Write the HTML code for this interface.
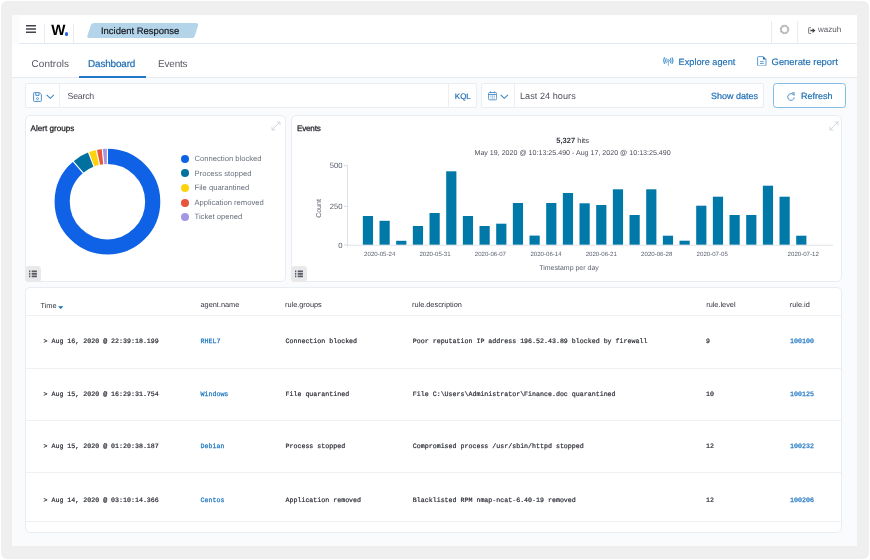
<!DOCTYPE html>
<html lang="en">
<head>
<meta charset="utf-8">
<title>Incident Response</title>
<style>
*{box-sizing:border-box;margin:0;padding:0}
html,body{width:870px;height:560px;overflow:hidden;background:#fff}
body{font-family:"Liberation Sans",sans-serif;color:#343741;position:relative}
#root{position:absolute;left:0;top:0;width:870px;height:560px;will-change:transform;text-rendering:geometricPrecision}
.abs{position:absolute}
#frame{left:.7px;top:.8px;width:868.2px;height:558.3px;background:#efefef;border-radius:6px}
#inner{left:12.4px;top:15px;width:845.1px;height:530.6px;background:#fafbfd}
#hdr{left:19px;top:15px;width:838.4px;height:29px;background:#fff;border-bottom:1px solid #e3e9f1}
#tabs{left:12.4px;top:44px;width:845px;height:33.8px;background:#fff;border-bottom:1px solid #e6e9ee}
.vline{width:1px;background:#e3e8f0}
.t{position:absolute;white-space:nowrap;line-height:1}
.tab{font-size:9.9px;color:#53575f;top:60.1px}
.blue{color:#1c6db3}
.box{position:absolute;background:#fff;border:1px solid #eaedf2;border-radius:2px}
.panel{position:absolute;background:#fff;border:1px solid #e9ecf3;border-radius:5px}
.ptitle{font-size:8.15px;color:#1a1c21;-webkit-text-stroke:0.25px #1a1c21}
.leg{font-size:7.65px;color:#69707d}
.dot{position:absolute;width:8.2px;height:8.2px;border-radius:50%}
.lbtn{position:absolute;width:16.1px;height:15.9px;background:#e9e9ea;border-radius:3.5px}
.th{font-size:7.35px;color:#2f333c;top:301.0px}
.mono{font-family:"Liberation Mono",monospace;font-size:6.63px;color:#2b2e36;-webkit-text-stroke:0.2px #2b2e36}
.mono.link{color:#2179c2;-webkit-text-stroke:0.25px #2179c2}
.rline{position:absolute;left:26px;width:815px;height:1px;background:#eef0f4}
</style>
</head>
<body>
<div id="root">
<div id="frame" class="abs"></div>
<div id="inner" class="abs"></div>

<!-- header -->
<div id="hdr" class="abs"></div>
<svg class="abs" style="left:26px;top:25px" width="10" height="8" viewBox="0 0 10 8"><path d="M0 .75h10M0 4h10M0 7.25h10" stroke="#40434b" stroke-width="1.4"/></svg>
<div class="abs vline" style="left:44.4px;top:24px;height:19px;background:#e9edf3"></div>
<div class="abs vline" style="left:73.1px;top:24px;height:19px;background:#e9edf3"></div><div class="abs" style="left:64.5px;top:32.1px;width:3.5px;height:3.5px;border-radius:50%;background:#2563eb"></div>
<div class="t" style="left:51.3px;top:22.6px;font-size:15px;font-weight:bold;color:#000;letter-spacing:-0.3px">W<span style="color:#2563eb;font-size:11px;margin-left:.1px">.</span></div>
<svg class="abs" style="left:86px;top:22.7px" width="113" height="15.4" viewBox="0 0 113 15.4"><path d="M4.54 2.87Q5.4 0 8.4 0H109.9Q112.9 0 112.04 2.87L108.96 12.53Q108.1 15.4 105.1 15.4H3.6Q.6 15.4 1.46 12.53Z" fill="#b4d5e9"/></svg>
<div class="t" style="left:101px;top:27px;font-size:9.45px;color:#15191f;-webkit-text-stroke:0.2px #15191f">Incident Response</div>
<div class="abs vline" style="left:771px;top:21px;height:22px;background:#ebebeb"></div>
<div class="abs vline" style="left:797px;top:21px;height:22px;background:#ebebeb"></div>
<svg class="abs" style="left:778.9px;top:24px" width="11" height="11" viewBox="0 0 11 11"><circle cx="5.5" cy="5.5" r="3.7" fill="none" stroke="#c9c9c9" stroke-width="2.1"/><circle cx="5.5" cy="5.5" r="3.7" fill="none" stroke="#9a9a9a" stroke-width="2.1" stroke-dasharray="1.4 1.5" opacity=".45"/></svg>
<svg class="abs" style="left:807.8px;top:26.8px" width="8" height="7.1" viewBox="0 0 9 8"><path d="M3.2 .7H1.4Q.7 .7 .7 1.4V6.6Q.7 7.3 1.4 7.3H3.2" fill="none" stroke="#555" stroke-width=".9"/><path d="M2.6 3.1H5.2V1.3L8.4 4L5.2 6.7V4.9H2.6Z" fill="#444"/></svg>
<div class="t" style="left:818px;top:25.7px;font-size:8px;color:#55585f">wazuh</div>

<!-- tabs -->
<div id="tabs" class="abs"></div>
<div class="t tab" style="left:31.6px;letter-spacing:.09px">Controls</div>
<div class="t tab blue" style="left:88px;letter-spacing:-.12px;-webkit-text-stroke:0.2px #1c6db3">Dashboard</div>
<div class="t tab" style="left:158px;letter-spacing:-.13px">Events</div>
<div class="abs" style="left:78.7px;top:76.3px;width:67.3px;height:1.4px;background:#2277c6"></div>
<svg class="abs" style="left:663.1px;top:56.9px" width="10.6" height="8.8" viewBox="0 0 10.6 8.8"><g fill="none" stroke="#5a9fd6" stroke-linecap="round"><path d="M1.5 .8Q-.1 3.6 1.5 6.4M9.1 .8Q10.7 3.6 9.1 6.4" stroke-width="1.3"/><path d="M3.2 1.5Q2.1 3.6 3.2 5.7M7.4 1.5Q8.5 3.6 7.4 5.7" stroke-width="1.15"/><circle cx="5.3" cy="3.5" r="1.05" stroke-width=".85"/><path d="M5.3 4.6V8.3" stroke-width=".85"/></g></svg>
<div class="t blue" style="left:678.6px;top:57.8px;font-size:9.2px;-webkit-text-stroke:0.15px #1c6db3">Explore agent</div>
<svg class="abs" style="left:757px;top:55.9px" width="9.6" height="10.6" viewBox="0 0 9.6 10.6"><path d="M1.5 .6H6.2L9 3.4V9.1Q9 10 8.1 10H1.5Q.6 10 .6 9.1V1.5Q.6 .6 1.5 .6Z" fill="none" stroke="#4a93cf" stroke-width=".9"/><path d="M6 .5L9.1 3.6H6Z" fill="#1c6db3"/><path d="M3 5.6H6.8M3 7.5H6.8" stroke="#4a93cf" stroke-width=".85"/></svg>
<div class="t blue" style="left:771.6px;top:56.5px;font-size:9.4px;-webkit-text-stroke:0.15px #1c6db3">Generate report</div>

<!-- search row -->
<div class="box" style="left:25px;top:83px;width:452px;height:25px"></div>
<div class="abs vline" style="left:59px;top:84px;height:23px;background:#eceff4"></div>
<div class="abs vline" style="left:448.3px;top:84px;height:23px;background:#eceff4"></div>
<svg class="abs" style="left:33px;top:91.6px" width="9" height="10" viewBox="0 0 9 10"><path d="M1.4 .6H6.4L8.4 2.6V8.6Q8.4 9.4 7.6 9.4H1.4Q.6 9.4 .6 8.6V1.4Q.6 .6 1.4 .6ZM2.8 .8V3.4H6V.8" fill="none" stroke="#3b83c0" stroke-width=".9"/><circle cx="4.5" cy="6.6" r="1" fill="none" stroke="#3b83c0" stroke-width=".8"/></svg>
<svg class="abs" style="left:45.6px;top:94px" width="8.6" height="5.4" viewBox="0 0 8 5"><path d="M.6 .8L4 4L7.4 .8" fill="none" stroke="#3b83c0" stroke-width="1"/></svg>
<div class="t" style="left:67.6px;top:91.5px;font-size:8.8px;letter-spacing:-.25px;color:#4c5059">Search</div>
<div class="t blue" style="left:454.8px;top:92.7px;font-size:8px;-webkit-text-stroke:0.2px #1c6db3">KQL</div>

<div class="box" style="left:481px;top:83px;width:283px;height:25px"></div>
<div class="abs vline" style="left:514px;top:84px;height:23px;background:#eceff4"></div>
<svg class="abs" style="left:488px;top:91.3px" width="9.2" height="9.6" viewBox="0 0 10 10"><rect x=".6" y="1.4" width="8.8" height="8" rx="1.2" fill="none" stroke="#3b83c0" stroke-width=".9"/><path d="M.6 3.6H9.4M2.8 .3V2.2M7.2 .3V2.2" stroke="#3b83c0" stroke-width=".9"/><path d="M2.6 5.4H7.4M2.6 7.4H7.4" stroke="#7fb0d8" stroke-width="1.2" stroke-dasharray="1.2 .6"/></svg>
<svg class="abs" style="left:500.4px;top:94px" width="8.6" height="5.4" viewBox="0 0 8 5"><path d="M.6 .8L4 4L7.4 .8" fill="none" stroke="#3b83c0" stroke-width="1"/></svg>
<div class="t" style="left:520px;top:92.1px;font-size:9.1px;letter-spacing:.05px;color:#4c5059">Last 24 hours</div>
<div class="t blue" style="left:711px;top:92.1px;font-size:9px;-webkit-text-stroke:0.2px #1c6db3">Show dates</div>
<div class="abs" style="left:773px;top:83px;width:73px;height:25.3px;border:1px solid #7fbde6;border-radius:3.5px;background:#fff"></div>
<svg class="abs" style="left:786.8px;top:91.5px" width="8" height="9" viewBox="0 0 8 9"><path d="M6.9 3.4A3.3 3.3 0 1 0 7.3 5.4" fill="none" stroke="#3b83c0" stroke-width=".9"/><path d="M4.6 1.2L7.2 .6L7 3.4" fill="none" stroke="#3b83c0" stroke-width=".9"/></svg>
<div class="t blue" style="left:801px;top:91.5px;font-size:9px;-webkit-text-stroke:0.2px #1c6db3">Refresh</div>

<!-- panels -->
<div class="panel" style="left:24.6px;top:115.2px;width:261.4px;height:166.7px"></div>
<div class="panel" style="left:290.8px;top:115.2px;width:551.4px;height:166.7px"></div>
<div class="panel" style="left:24.6px;top:287.4px;width:817.6px;height:245.4px"></div>

<div class="t ptitle" style="left:30.6px;top:124.5px">Alert groups</div>
<div class="t ptitle" style="left:297px;top:124.8px;letter-spacing:-.22px">Events</div>
<svg class="abs" style="left:270.7px;top:121.3px" width="10" height="10" viewBox="0 0 10 10"><path d="M1 9L9 1M5.8 1H9V4.2M1 5.8V9H4.2" fill="none" stroke="#cdced2" stroke-width=".8"/></svg>
<svg class="abs" style="left:829px;top:121px" width="10" height="10" viewBox="0 0 10 10"><path d="M1 9L9 1M5.8 1H9V4.2M1 5.8V9H4.2" fill="none" stroke="#cdced2" stroke-width=".8"/></svg>

<!-- donut -->
<svg class="abs" style="left:49px;top:143px" width="118" height="118" viewBox="-58.45 -58.7 118 118"><g fill="none" stroke-width="15.15" transform="rotate(-90)"><circle r="45.27" stroke="#0f62e5" pathLength="360" stroke-dasharray="319.70 40.30"/><circle r="45.27" stroke="#00709f" pathLength="360" stroke-dasharray="0 319.70 19.30 21.00"/><circle r="45.27" stroke="#fed30b" pathLength="360" stroke-dasharray="0 339.00 8.90 12.10"/><circle r="45.27" stroke="#e6553d" pathLength="360" stroke-dasharray="0 347.90 6.50 5.60"/><circle r="45.27" stroke="#a596e2" pathLength="360" stroke-dasharray="0 354.40 5.60 0.00"/></g><g stroke="#fff" stroke-width="1.15"><line x1="0" y1="-37" x2="0" y2="-54" transform="rotate(0)"/><line x1="0" y1="-37" x2="0" y2="-54" transform="rotate(-5.6)"/><line x1="0" y1="-37" x2="0" y2="-54" transform="rotate(-12.1)"/><line x1="0" y1="-37" x2="0" y2="-54" transform="rotate(-21.0)"/><line x1="0" y1="-37" x2="0" y2="-54" transform="rotate(-40.3)"/></g></svg>
<div class="dot" style="left:181.2px;top:154.7px;background:#0f62e5"></div>
<div class="dot" style="left:181.2px;top:169.3px;background:#00709f"></div>
<div class="dot" style="left:181.2px;top:183.9px;background:#fed30b"></div>
<div class="dot" style="left:181.2px;top:198.5px;background:#e6553d"></div>
<div class="dot" style="left:181.2px;top:213.1px;background:#a596e2"></div>
<div class="t leg" style="left:194.5px;top:155px">Connection blocked</div>
<div class="t leg" style="left:194.5px;top:169.6px">Process stopped</div>
<div class="t leg" style="left:194.5px;top:184.2px">File quarantined</div>
<div class="t leg" style="left:194.5px;top:198.8px">Application removed</div>
<div class="t leg" style="left:194.5px;top:213.4px">Ticket opened</div>

<div class="lbtn" style="left:24.6px;top:266.2px"></div>
<div class="lbtn" style="left:290.6px;top:266.2px"></div>
<svg class="abs" style="left:29px;top:270px" width="8" height="8" viewBox="0 0 8 8"><path d="M0 1.3H1.3M0 3.8H1.3M0 6.3H1.3M2.7 1.3H7.9M2.7 3.8H7.9M2.7 6.3H7.9" stroke="#585b63" stroke-width="1.75"/></svg>
<svg class="abs" style="left:295px;top:270px" width="8" height="8" viewBox="0 0 8 8"><path d="M0 1.3H1.3M0 3.8H1.3M0 6.3H1.3M2.7 1.3H7.9M2.7 3.8H7.9M2.7 6.3H7.9" stroke="#585b63" stroke-width="1.75"/></svg>

<!-- histogram -->
<div class="t" style="left:472.6px;top:136.7px;width:200px;text-align:center;font-size:7.55px;color:#343741"><b>5,327</b> hits</div>
<div class="t" style="left:422.6px;top:150.3px;width:300px;text-align:center;font-size:7.1px;color:#4a4e58">May 19, 2020 @ 10:13:25.490 - Aug 17, 2020 @ 10:13:25.490</div>
<svg class="abs" style="left:300px;top:155px" width="540" height="125" viewBox="300 155 540 125" font-family="Liberation Sans, sans-serif">
<g fill="#0079a8"><rect x="362.85" y="216.0" width="10.2" height="28.85"/><rect x="379.52" y="220.8" width="10.2" height="24.05"/><rect x="396.18" y="240.8" width="10.2" height="4.05"/><rect x="412.85" y="226.0" width="10.2" height="18.85"/><rect x="429.52" y="213.0" width="10.2" height="31.85"/><rect x="446.19" y="171.3" width="10.2" height="73.55"/><rect x="462.85" y="216.0" width="10.2" height="28.85"/><rect x="479.52" y="226.0" width="10.2" height="18.85"/><rect x="496.19" y="223.7" width="10.2" height="21.15"/><rect x="512.85" y="203.0" width="10.2" height="41.85"/><rect x="529.52" y="235.6" width="10.2" height="9.25"/><rect x="546.19" y="203.0" width="10.2" height="41.85"/><rect x="562.85" y="193.0" width="10.2" height="51.85"/><rect x="579.52" y="203.3" width="10.2" height="41.55"/><rect x="596.19" y="205.0" width="10.2" height="39.85"/><rect x="612.86" y="189.3" width="10.2" height="55.55"/><rect x="629.52" y="215.0" width="10.2" height="29.85"/><rect x="646.19" y="189.3" width="10.2" height="55.55"/><rect x="662.86" y="235.7" width="10.2" height="9.15"/><rect x="679.52" y="240.7" width="10.2" height="4.15"/><rect x="696.19" y="205.7" width="10.2" height="39.15"/><rect x="712.86" y="196.7" width="10.2" height="48.15"/><rect x="729.52" y="215.0" width="10.2" height="29.85"/><rect x="746.19" y="215.0" width="10.2" height="29.85"/><rect x="762.86" y="185.7" width="10.2" height="59.15"/><rect x="779.53" y="196.7" width="10.2" height="48.15"/><rect x="796.19" y="235.7" width="10.2" height="9.15"/></g>
<path d="M347.5 165.5V247M347.5 245.25H833" fill="none" stroke="#dfe2e8" stroke-width="1"/>
<path d="M344 165.7H347.5M344 206.3H347.5M344 244.8H347.5" stroke="#d3d7de" stroke-width=".9"/>
<g font-size="7.65" fill="#585e6b" text-anchor="end"><text x="342.5" y="168.4">500</text><text x="342.5" y="209">250</text><text x="342.5" y="247.6">0</text></g>
<text font-size="7" fill="#5d6371" text-anchor="middle" transform="translate(321.4 208.5) rotate(-90)">Count</text>
<g font-size="6.1" fill="#5d6371" text-anchor="middle"><text x="379.7" y="255.6">2020-05-24</text><text x="435" y="255.6">2020-05-31</text><text x="490.4" y="255.6">2020-06-07</text><text x="546" y="255.6">2020-06-14</text><text x="601.3" y="255.6">2020-06-21</text><text x="656.7" y="255.6">2020-06-28</text><text x="712.2" y="255.6">2020-07-05</text><text x="803.2" y="255.6">2020-07-12</text></g>
<text x="569" y="270.1" font-size="7" fill="#5d6371" text-anchor="middle">Timestamp per day</text>
</svg>

<!-- table -->
<div class="t th" style="left:40.5px;top:302px">Time<svg style="position:absolute;left:17.3px;top:3.6px" width="5.4" height="3" viewBox="0 0 5.4 3"><path d="M.5 .3H4.9Q5.3 .3 5 .7L3 2.7Q2.7 3 2.4 2.7L.4 .7Q.1 .3 .5 .3Z" fill="#1a74bd"/></svg></div>
<div class="t th" style="left:200.5px">agent.name</div>
<div class="t th" style="left:285px">rule.groups</div>
<div class="t th" style="left:412px">rule.description</div>
<div class="t th" style="left:706.2px">rule.level</div>
<div class="t th" style="left:789.8px">rule.id</div>
<div class="rline" style="top:315.2px"></div>
<div class="rline" style="top:367.7px"></div>
<div class="rline" style="top:419.6px"></div>
<div class="rline" style="top:471.7px"></div>
<div class="rline" style="top:521.1px"></div>

<div class="t mono" style="left:43.5px;top:338.2px">&gt; Aug 16, 2020 @ 22:39:18.199</div>
<div class="t mono link" style="left:200.5px;top:338.2px">RHEL7</div>
<div class="t mono" style="left:285.5px;top:338.2px">Connection blocked</div>
<div class="t mono" style="left:412.8px;top:338.2px">Poor reputation IP address 196.52.43.89 blocked by firewall</div>
<div class="t mono" style="left:706px;top:338.2px">9</div>
<div class="t mono link" style="left:790px;top:338.2px">100100</div>

<div class="t mono" style="left:43.5px;top:391.2px">&gt; Aug 15, 2020 @ 16:29:31.754</div>
<div class="t mono link" style="left:200.5px;top:391.2px">Windows</div>
<div class="t mono" style="left:285.5px;top:391.2px">File quarantined</div>
<div class="t mono" style="left:412.8px;top:391.2px">File C:\Users\Administrator\Finance.doc quarantined</div>
<div class="t mono" style="left:706px;top:391.2px">10</div>
<div class="t mono link" style="left:790px;top:391.2px">100125</div>

<div class="t mono" style="left:43.5px;top:443.3px">&gt; Aug 15, 2020 @ 01:20:38.187</div>
<div class="t mono link" style="left:200.5px;top:443.3px">Debian</div>
<div class="t mono" style="left:285.5px;top:443.3px">Process stopped</div>
<div class="t mono" style="left:412.8px;top:443.3px">Compromised process /usr/sbin/httpd stopped</div>
<div class="t mono" style="left:706px;top:443.3px">12</div>
<div class="t mono link" style="left:790px;top:443.3px">100232</div>

<div class="t mono" style="left:43.5px;top:497.1px">&gt; Aug 14, 2020 @ 03:10:14.366</div>
<div class="t mono link" style="left:200.5px;top:497.1px">Centos</div>
<div class="t mono" style="left:285.5px;top:497.1px">Application removed</div>
<div class="t mono" style="left:412.8px;top:497.1px">Blacklisted RPM nmap-ncat-6.40-19 removed</div>
<div class="t mono" style="left:706px;top:497.1px">12</div>
<div class="t mono link" style="left:790px;top:497.1px">100206</div>
</div>
</body>
</html>
